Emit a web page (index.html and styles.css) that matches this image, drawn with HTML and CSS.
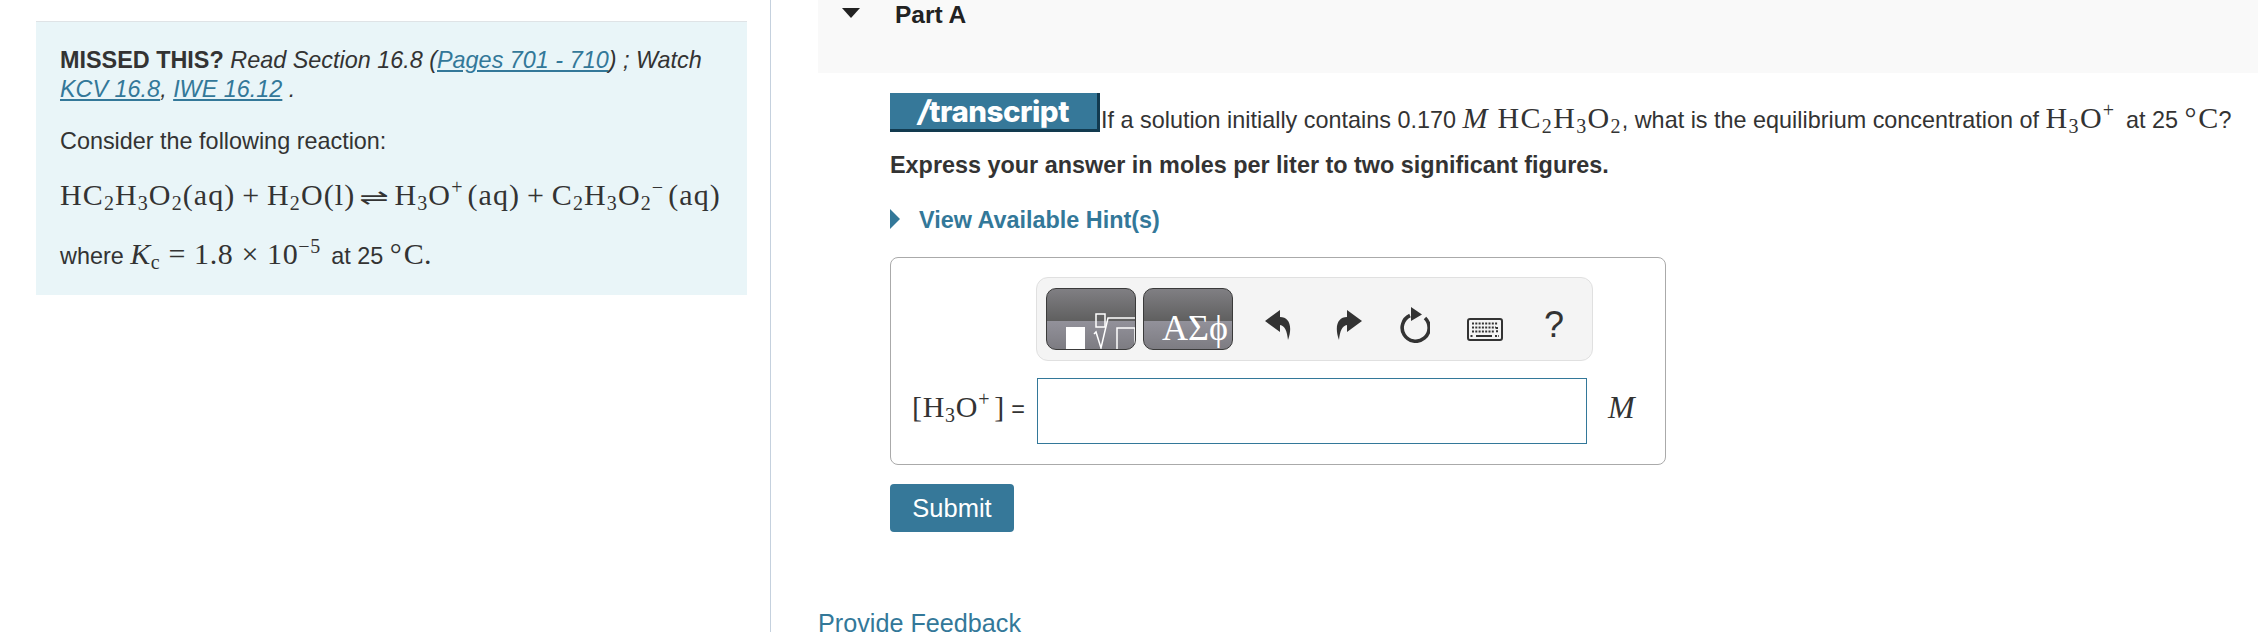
FILE: index.html
```html
<!DOCTYPE html>
<html lang="en">
<head>
<meta charset="utf-8">
<title>Part A</title>
<link rel="stylesheet" href="styles.css">
</head>
<body>
<div class="page">
  <aside class="side">
    <section class="note">
      <p class="p-intro"><b>MISSED THIS?</b> <i>Read Section 16.8 (<a href="#">Pages 701 - 710</a>) ; Watch<br><a href="#">KCV 16.8</a>, <a href="#">IWE 16.12</a> .</i></p>
      <p class="p-text">Consider the following reaction:</p>
      <p class="p-eq"><span class="m wide tight">HC<sub>2</sub>H<sub>3</sub>O<sub>2</sub>(aq) + H<sub>2</sub>O(l) <span class="eqm">⇌</span> H<sub>3</sub>O<sup>+</sup>(aq) + C<sub>2</sub>H<sub>3</sub>O<sub>2</sub><sup>−</sup>(aq)</span></p>
      <p class="p-last">where <span class="m kc"><i>K</i><sub>c</sub> = 1.8 × 10<sup>−5</sup></span> at 25 <span class="m deg">° C.</span></p>
    </section>
  </aside>
  <main class="main">
    <header class="part">
      <svg class="caret" viewBox="0 0 18 10" width="18" height="10"><path d="M0 0H18L9 10Z"/></svg>
      <h2 class="part-title">Part A</h2>
    </header>
    <div class="body">
      <div class="question">
        <span class="badge"><span class="badge-text"><i>/</i>transcript</span></span>
        <span class="q-text">If a solution initially contains 0.170 <span class="m mid"><i>M</i> HC<sub>2</sub>H<sub>3</sub>O<sub>2</sub></span>, what is the equilibrium concentration of <span class="m mid">H<sub>3</sub>O<sup>+</sup></span> at 25 <span class="m deg">° C</span>?</span>
      </div>
      <p class="express">Express your answer in moles per liter to two significant figures.</p>
      <a class="hint" href="#">
        <svg class="hint-arrow" viewBox="0 0 10 20" width="10" height="20"><path d="M0 0L10 10L0 20Z"/></svg>
        <span>View Available Hint(s)</span>
      </a>
      <div class="answer">
        <div class="tool-row">
          <div class="toolbar">
            <div class="tpl">
              <svg viewBox="0 0 90 61" width="90" height="61">
                <rect x="20" y="39" width="19" height="22" fill="#fff"/>
                <g fill="none" stroke="#fff" stroke-width="1.5">
                  <rect x="50" y="26" width="9" height="13"/>
                  <path d="M48 46L50 44L55 60L62 30H90"/>
                  <path d="M71 61V40H89V61"/>
                </g>
              </svg>
            </div>
            <div class="tpl tpl-text">ΑΣϕ</div>
            <svg class="ic ic-undo" viewBox="0 0 26 30" width="26" height="30"><path d="M0 11L15 0V7C24 7 28 16 23 30C22 21 20 16 15 15V22Z"/></svg>
            <svg class="ic ic-redo" viewBox="0 0 26 30" width="26" height="30"><path transform="matrix(-1 0 0 1 26 0)" d="M0 11L15 0V7C24 7 28 16 23 30C22 21 20 16 15 15V22Z"/></svg>
            <svg class="ic ic-reset" viewBox="0 0 32 36" width="32" height="36"><path d="M12 8.500A13.500 13.500 0 1 0 27 11" fill="none" stroke="#333" stroke-width="3.600"/><path d="M13 0L24 7.500L13 14Z"/></svg>
            <svg class="ic ic-keys" viewBox="0 0 36 23" width="36" height="23">
              <rect x="1" y="1" width="34" height="21" rx="2" fill="none" stroke="#333" stroke-width="2"/>
              <path d="M5 5.500H31M5 9.500H29M5 13.500H27M3.500 18H6M28 18H32M30 9V15" stroke="#333" stroke-width="2" stroke-dasharray="2 1.300" fill="none"/>
              <path d="M9 18H25" stroke="#333" stroke-width="2"/>
            </svg>
            <span class="ic-help">?</span>
          </div>
        </div>
        <div class="input-row">
          <label class="lbl"><span class="m lbl-math">[H<sub>3</sub>O<sup>+</sup>]</span> =</label>
          <input class="field" type="text" aria-label="answer">
          <span class="m unit"><i>M</i></span>
        </div>
      </div>
      <button class="submit" type="button">Submit</button>
    </div>
    <a class="feedback" href="#">Provide Feedback</a>
  </main>
</div>
</body>
</html>
```

FILE: styles.css
```css
* { box-sizing: border-box; }
html, body { margin: 0; padding: 0; height: 632px; overflow: hidden; background: #fff; }
body { font-family: "Liberation Sans", Arial, sans-serif; font-size: 23.400px; color: #333; }
a { color: #337899; }
p { margin: 0; }

.page { display: flex; height: 632px; overflow: hidden; }
.side { width: 771px; flex: none; border-right: 1px solid #c5d1de; padding: 21px 23px 0 36px; }
.note { background: #e9f5f8; border-top: 1px solid #dfe3e6; padding: 24px 24px 18px; height: 274px; line-height: 29px; }
.p-text { margin-top: 23px; }
.p-eq { margin-top: 19px; line-height: 40px; white-space: nowrap; }
.p-last { margin-top: 17px; line-height: 40px; white-space: nowrap; }

.m { font-family: "Liberation Serif", "Times New Roman", serif; font-size: 30px; letter-spacing: .2px; color: #333; }
.wide { letter-spacing: 1.100px; }
.tight { word-spacing: -1.800px; }
.kc { letter-spacing: .6px; }
.mid { letter-spacing: 1.300px; }
.lbl-math { letter-spacing: .7px; }
.lbl-math sup { margin-right: 2px; }
.deg { word-spacing: -6px; }
.m sub, .m sup { font-size: 20px; line-height: 0; }
.m sub { vertical-align: -5px; }
.m sup { vertical-align: 11px; margin-right: 4px; }
.eqm { display: inline-block; font-family: "DejaVu Sans", sans-serif; font-size: 22px; line-height: 1; margin: 0 3px; transform: scaleX(1.6); }

.main { flex: 1; min-width: 0; padding-left: 47px; }
.part { height: 73px; background: #f9f9f9; display: flex; align-items: flex-start; padding-left: 24px; }
.caret { margin-top: 8px; fill: #222; flex: none; }
.part-title { margin: 0 0 0 35px; font-size: 24.500px; line-height: 29px; font-weight: bold; color: #222; }

.body { padding-left: 72px; }
.question { display: flex; align-items: flex-end; margin-top: 20px; height: 39px; white-space: nowrap; }
.badge { width: 210px; height: 39px; background: #367899; border-right: 3px solid #123a4f; border-bottom: 3px solid #123a4f; display: flex; align-items: center; justify-content: center; flex: none; }
.badge-text { font-family: "Inter", "Open Sans", sans-serif; font-weight: 800; font-size: 29.500px; letter-spacing: -.5px; color: #fff; line-height: 36px; }
.q-text { margin-left: 1px; margin-bottom: -3px; line-height: 30px; display: block; }
.express { margin-top: 19px; font-weight: bold; line-height: 29px; color: #333; }
.hint { display: flex; align-items: center; margin-top: 26px; height: 29px; font-weight: bold; text-decoration: none; }
.hint-arrow { fill: #337899; margin-right: 19px; margin-top: -4px; }

.answer { width: 776px; height: 208px; margin-top: 22px; border: 1px solid #aaa; border-radius: 8px; padding: 19px 0 0 0; }
.tool-row { padding-left: 145px; }
.toolbar { width: 557px; height: 84px; background: #f4f4f4; border: 1px solid #e0e0e0; border-radius: 12px; display: flex; align-items: center; padding: 0 0 0 9px; }
.tpl { width: 90px; height: 62px; border: 1px solid #3a3a3a; border-radius: 10px; overflow: hidden; background: linear-gradient(#807f83 0, #5f5f5f 54%, #92919a 54%, #7d7c82 100%); display: flex; flex: none; }
.tpl svg { display: block; flex: none; margin: -1px 0 0 -1px; }
.tpl-text { margin-left: 7px; color: #fff; font-family: "Liberation Serif", serif; font-size: 36px; line-height: 1; align-items: flex-end; justify-content: center; padding-left: 14px; padding-bottom: 3px; }
.ic { fill: #333; flex: none; }
.ic-undo { margin-left: 32px; margin-top: 12px; }
.ic-redo { margin-left: 45px; margin-top: 12px; }
.ic-reset { margin-left: 36px; margin-top: 12px; }
.ic-keys { margin-left: 37px; margin-top: 21px; }
.ic-help { margin-left: 41px; font-size: 36px; line-height: 36px; margin-top: 12px; color: #333; }

.input-row { display: flex; align-items: center; margin-top: 17px; }
.lbl { width: 146px; padding-left: 21px; white-space: nowrap; flex: none; margin-bottom: 8px; }
.field { width: 550px; height: 66px; border: 1px solid #337899; background: #fff; padding: 0; margin: 0; flex: none; border-radius: 0; outline: none; }
.unit { margin-left: 21px; margin-bottom: 8px; font-size: 32px; }

.submit { display: block; width: 124px; height: 48px; margin-top: 19px; background: #367899; color: #fff; border: 0; border-radius: 4px; font-family: "Liberation Sans", Arial, sans-serif; font-size: 25.500px; padding: 0; }
.feedback { display: block; margin-top: 76px; font-size: 25.200px; line-height: 30px; text-decoration: none; }
```
